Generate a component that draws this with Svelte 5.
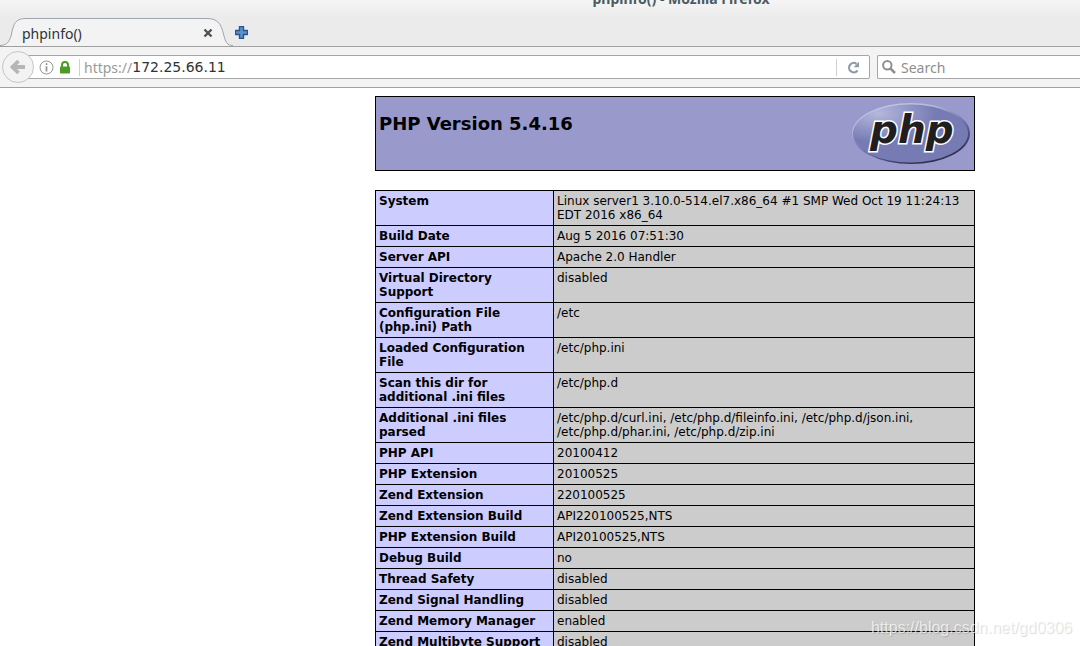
<script lang="ts">
	let url = $state('172.25.66.11');
	let query = $state('');

	const rows: [string, string][] = [
		['System', 'Linux server1 3.10.0-514.el7.x86_64 #1 SMP Wed Oct 19 11:24:13 EDT 2016 x86_64'],
		['Build Date', 'Aug 5 2016 07:51:30'],
		['Server API', 'Apache 2.0 Handler'],
		['Virtual Directory Support', 'disabled'],
		['Configuration File (php.ini) Path', '/etc'],
		['Loaded Configuration File', '/etc/php.ini'],
		['Scan this dir for additional .ini files', '/etc/php.d'],
		[
			'Additional .ini files parsed',
			'/etc/php.d/curl.ini, /etc/php.d/fileinfo.ini, /etc/php.d/json.ini, /etc/php.d/phar.ini, /etc/php.d/zip.ini'
		],
		['PHP API', '20100412'],
		['PHP Extension', '20100525'],
		['Zend Extension', '220100525'],
		['Zend Extension Build', 'API220100525,NTS'],
		['PHP Extension Build', 'API20100525,NTS'],
		['Debug Build', 'no'],
		['Thread Safety', 'disabled'],
		['Zend Signal Handling', 'disabled'],
		['Zend Memory Manager', 'enabled'],
		['Zend Multibyte Support', 'disabled']
	];
</script>

<div class="window">
	<header class="titlebar">
		<div class="window-title">phpinfo() - Mozilla Firefox</div>
		<div class="tabs">
			<div class="tab">
				<svg class="tab-shape" width="233" height="30" viewBox="0 0 233 30" aria-hidden="true">
					<path
						d="M0 28.500C7 28.500 10 24 11.500 17C13.500 7 15 1.500 26 1.500H207C218 1.500 221 7 223.500 17C225.500 25 227 28.500 233 28.500V30H0Z"
						fill="#f3f3f3"
					/>
					<path
						d="M0 28.500C7 28.500 10 24 11.500 17C13.500 7 15 1.500 26 1.500H207C218 1.500 221 7 223.500 17C225.500 25 227 28.500 233 28.500"
						fill="none"
						stroke="#9ea5ad"
					/>
				</svg>
				<span class="tab-label">phpinfo()</span>
				<button class="tab-close" aria-label="Close tab">
					<svg width="10" height="10" viewBox="0 0 10 10">
						<path d="M1.500 1.500L8.500 8.500M8.500 1.500L1.500 8.500" stroke="#4b5254" stroke-width="2.400" />
					</svg>
				</button>
			</div>
			<button class="new-tab" aria-label="New tab">
				<svg width="13" height="13" viewBox="0 0 13 13">
					<path
						d="M4.500 .5h4v4h4v4h-4v4h-4v-4h-4v-4h4z"
						fill="#5f8fca"
						stroke="#27558f"
						stroke-width="1.400"
						stroke-linejoin="round"
					/>
				</svg>
			</button>
		</div>
	</header>

	<nav class="toolbar">
		<button class="back" aria-label="Back">
			<svg width="16" height="16" viewBox="0 0 16 16">
				<path d="M8.500 2L2.500 8L8.500 14M3 8H15" fill="none" stroke="#b6b6b6" stroke-width="3.800" />
			</svg>
		</button>
		<div class="urlbar">
			<svg width="15" height="15" viewBox="0 0 15 15" aria-hidden="true">
				<circle cx="7.500" cy="7.500" r="6.500" fill="none" stroke="#969696" />
				<path d="M7.500 3.200v1.800M7.500 6.200v5.300" stroke="#969696" stroke-width="1.800" />
			</svg>
			<svg class="lock" width="10" height="13" viewBox="0 0 10 13" aria-hidden="true">
				<path d="M2 7V4a3 3 0 0 1 6 0v3" fill="none" stroke="#4d9a26" stroke-width="2" />
				<rect y="5.500" width="10" height="7" rx=".8" fill="#4d9a26" />
			</svg>
			<label class="scheme" for="url">https://</label>
			<input id="url" type="text" bind:value={url} />
			<button class="reload" aria-label="Reload">
				<svg width="13" height="13" viewBox="0 0 13 13">
					<path d="M10.500 9.500A4.700 4.700 0 1 1 9.500 2.800" fill="none" stroke="#8c9aab" stroke-width="2.200" />
					<path d="M12 .8V6.200H6.600Z" fill="#8c9aab" />
				</svg>
			</button>
		</div>
		<div class="search">
			<svg width="14" height="14" viewBox="0 0 14 14" aria-hidden="true">
				<circle cx="5.300" cy="5.300" r="4.200" fill="none" stroke="#8f8f8f" stroke-width="2" />
				<path d="M8.300 8.300L13 13" stroke="#8f8f8f" stroke-width="2.600" />
			</svg>
			<input type="text" placeholder="Search" aria-label="Search" bind:value={query} />
		</div>
	</nav>

	<main class="page">
		<div class="center">
			<div class="banner">
				<h1>PHP Version 5.4.16</h1>
				<a href="http://www.php.net/" aria-label="PHP">
					<svg width="120" height="67" viewBox="0 0 120 67">
						<defs>
							<linearGradient id="rim" x1=".2" y1="0" x2=".8" y2="1">
								<stop offset="0" stop-color="#c6c9e6" />
								<stop offset=".25" stop-color="#b4b8dc" />
								<stop offset=".5" stop-color="#777bb3" />
								<stop offset=".75" stop-color="#454974" />
								<stop offset="1" stop-color="#20233d" />
							</linearGradient>
							<radialGradient id="shine" cx=".22" cy=".15" r=".5">
								<stop offset="0" stop-color="#b4b8dc" />
								<stop offset="1" stop-color="#777bb3" />
							</radialGradient>
						</defs>
						<ellipse cx="60" cy="33.500" rx="59" ry="30.500" fill="url(#rim)" />
						<ellipse cx="59.500" cy="33.500" rx="57.500" ry="29" fill="url(#shine)" />
						<text class="logo-text" x="19" y="43">php</text>
					</svg>
				</a>
			</div>

			<table>
				<tbody>
					{#each rows as [name, value]}
						<tr>
							<th scope="row">{name}</th>
							<td>{value}</td>
						</tr>
					{/each}
				</tbody>
			</table>
		</div>
	</main>

	<div class="watermark">https://blog.csdn.net/gd0306</div>
</div>

<style>
	:global(body) {
		background: #fff;
		overflow: hidden;
	}

	.window {
		position: relative;
		height: 100vh;
		overflow: hidden;
		font-family: 'Noto Sans', 'Open Sans', sans-serif;
		font-size: 14px;
		color: #2e3436;
	}

	button {
		display: flex;
		align-items: center;
		justify-content: center;
		padding: 0;
		border: 0;
		background: none;
	}

	input {
		flex: 1;
		min-width: 0;
		padding: 0;
		border: 0;
		outline: 0;
		background: none;
		font: inherit;
		color: inherit;
	}

	.titlebar {
		height: 46px;
		overflow: hidden;
		display: flex;
		flex-direction: column;
		justify-content: flex-end;
		background: linear-gradient(#f5f5f5, #ebebeb 18px);
		border-bottom: 1px solid #a0a0a0;
	}

	.window-title {
		padding-left: 282px;
		margin-bottom: 8px;
		line-height: 20px;
		text-align: center;
		font-weight: 700;
		color: #4b5b60;
	}

	.tabs {
		display: flex;
		align-items: center;
		flex: none;
		height: 30px;
		margin-bottom: -1px;
	}

	.tab {
		position: relative;
		display: flex;
		align-items: center;
		justify-content: space-between;
		box-sizing: border-box;
		width: 233px;
		height: 30px;
		padding: 2px 20px 0 22px;
	}

	.tab-shape {
		position: absolute;
		left: 0;
		top: 0;
	}

	.tab-label,
	.tab-close {
		position: relative;
	}

	.new-tab {
		margin-left: 2px;
	}

	.toolbar {
		display: flex;
		align-items: center;
		height: 40px;
		padding-left: 2px;
		background: #f3f3f3;
		border-bottom: 1px solid #a0a0a0;
	}

	.back {
		position: relative;
		z-index: 1;
		flex: none;
		width: 32px;
		height: 32px;
		border: 1px solid #c6c6c6;
		border-radius: 50%;
		background: #f3f3f3;
	}

	.urlbar,
	.search {
		display: flex;
		align-items: center;
		box-sizing: border-box;
		height: 24px;
		border: 1px solid #a6a6a6;
		background: #fff;
	}

	.urlbar {
		flex: 1;
		margin-left: -16px;
		padding-left: 20px;
		border-radius: 0 2px 2px 0;
	}

	.lock {
		margin: 0 9px 0 6px;
	}

	.scheme {
		padding-left: 4px;
		border-left: 1px solid #d0d0d0;
		line-height: 17px;
		color: #9a9a9a;
	}

	.urlbar input {
		font-family: 'DejaVu Sans', sans-serif;
	}

	.reload {
		width: 33px;
		height: 17px;
		border-left: 1px solid #d0d0d0;
	}

	.search {
		width: 203px;
		margin-left: 7px;
		padding-left: 4px;
		gap: 5px;
		border-right: 0;
		border-radius: 2px 0 0 2px;
	}

	.search input::placeholder {
		color: #8e8e8e;
		opacity: 1;
	}

	.page {
		display: grid;
		grid-template-columns: 25fr 600px 7fr;
		padding-top: 8px;
		font-family: 'DejaVu Sans', sans-serif;
		font-size: 12px;
		line-height: 14px;
		color: #000;
	}

	.center {
		grid-column: 2;
	}

	.banner {
		display: flex;
		justify-content: space-between;
		margin-bottom: 19px;
		padding: 3px;
		background: #9999cc;
		border: 1px solid #000;
	}

	.banner a {
		display: flex;
	}

	h1 {
		margin: 13px 0 0;
		font-size: 18px;
		line-height: 21px;
	}

	.logo-text {
		font: italic 700 39px 'DejaVu Sans', sans-serif;
		fill: #221e1f;
		stroke: #fff;
		stroke-width: 3px;
		stroke-linejoin: miter;
		paint-order: stroke;
	}

	table {
		width: 100%;
		table-layout: fixed;
		border-collapse: collapse;
	}

	th,
	td {
		padding: 3px;
		border: 1px solid #000;
		vertical-align: top;
	}

	th {
		box-sizing: border-box;
		width: 178px;
		text-align: left;
		background: #ccccff;
	}

	td {
		background: #cccccc;
	}

	.watermark {
		position: absolute;
		right: 8px;
		bottom: 8px;
		font: 16px/20px 'Liberation Sans', sans-serif;
		color: rgba(255, 255, 255, 0.7);
		text-shadow: 1px 1px 1px rgba(0, 0, 0, 0.15);
	}
</style>
